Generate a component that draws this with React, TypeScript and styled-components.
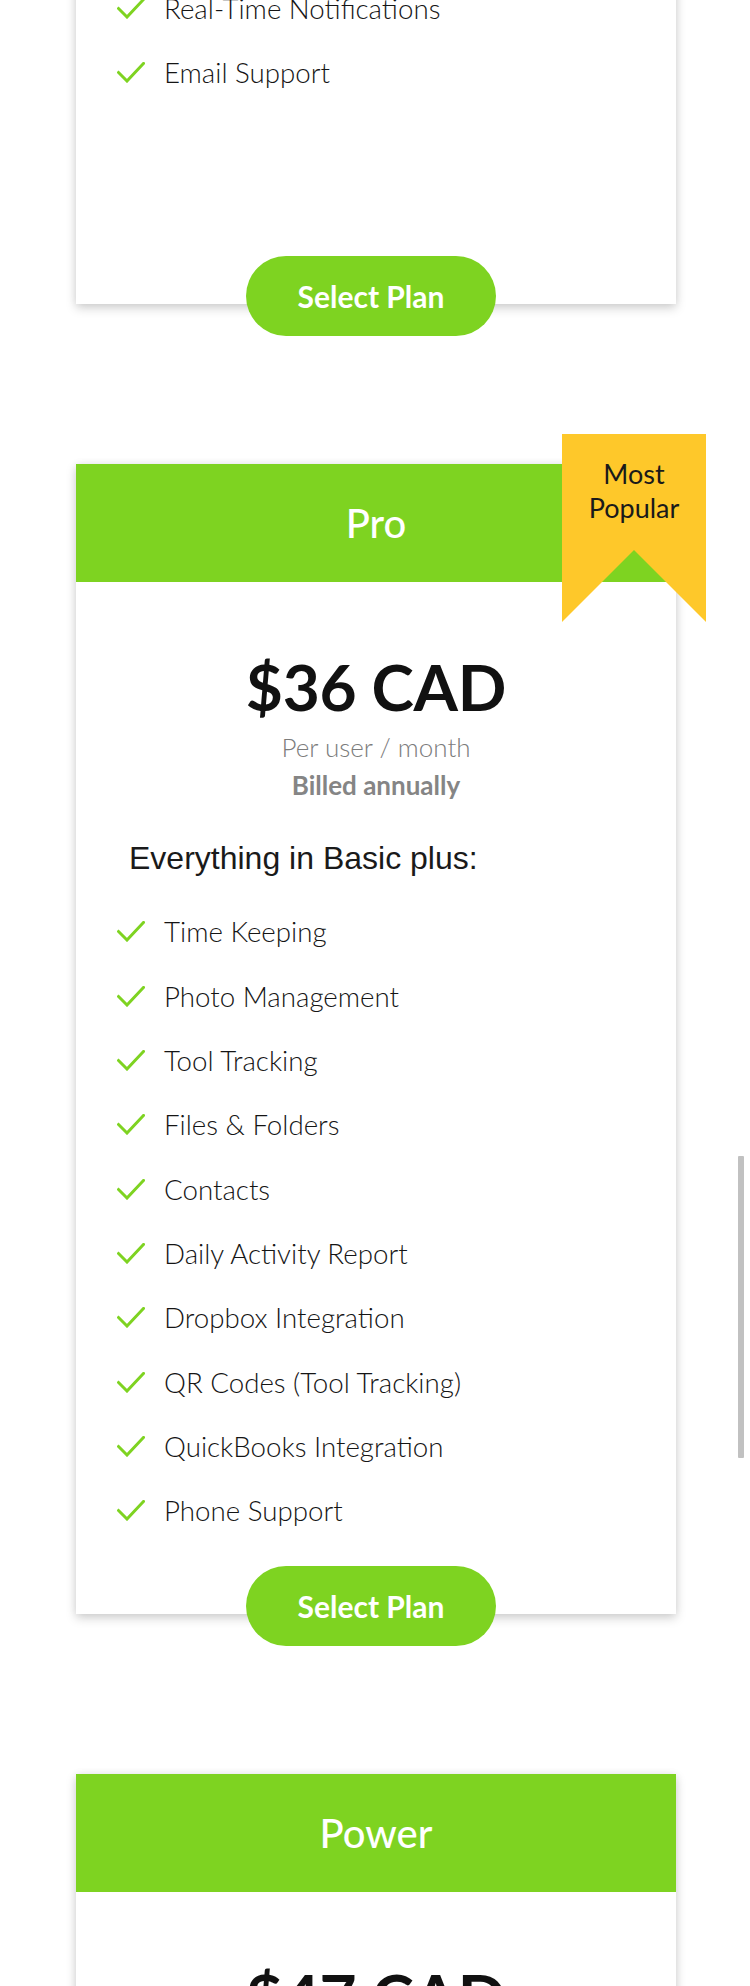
import { styled, createGlobalStyle } from "styled-components";

const GlobalStyle = createGlobalStyle`
	html, body {
		margin: 0;
		padding: 0;
		background: #ffffff;
		overflow: hidden;
	}
`;

const GREEN = "#7ed321";

const Page = styled.div`
	width: 750px;
	height: 1986px;
	overflow: hidden;
	box-sizing: border-box;
	padding-left: 2px;
	display: flex;
	flex-direction: column;
	align-items: center;
	gap: 160px;
	font-family: Lato, "Open Sans", sans-serif;
`;

const Card = styled.div<{ $clipped?: boolean }>`
	position: relative;
	flex-shrink: 0;
	width: 600px;
	display: flex;
	flex-direction: column;
	background: #ffffff;
	margin-top: ${(p) => (p.$clipped ? "-24px" : "0")};
	box-shadow: 0 4px 10px rgba(0, 0, 0, 0.18), 0 0 8px rgba(0, 0, 0, 0.06);
`;

const CardHeader = styled.div`
	height: 118px;
	display: flex;
	align-items: center;
	justify-content: center;
	background: ${GREEN};

	h2 {
		margin: 0;
		color: #ffffff;
		font-size: 40px;
		font-weight: 500;
		line-height: 1;
	}
`;

const Ribbon = styled.div`
	position: absolute;
	top: -30px;
	right: -30px;
	width: 144px;
	height: 188px;
	box-sizing: border-box;
	padding-top: 23px;
	background: #fec82a;
	clip-path: polygon(0 0, 100% 0, 100% 100%, 50% 116px, 0 100%);
	color: #1a1a1a;
	font-size: 27px;
	line-height: 34px;
	text-align: center;
`;

const CardBody = styled.div`
	padding-top: 67px;
	text-align: center;
`;

const Price = styled.div`
	margin: 0;
	font-size: 64px;
	font-weight: 700;
	line-height: 1.2;
	letter-spacing: -0.3px;
	color: #111111;
`;

const Period = styled.div<{ $bold?: boolean }>`
	font-size: 26px;
	line-height: 38px;
	font-weight: ${(p) => (p.$bold ? 700 : 300)};
	color: ${(p) => (p.$bold ? "#858585" : "#7c7c7c")};
	margin-top: ${(p) => (p.$bold ? "0" : "2px")};
`;

const Intro = styled.div`
	margin-top: 34px;
	padding-left: 53px;
	text-align: left;
	font-family: "Liberation Sans", Arial, sans-serif;
	font-size: 32px;
	line-height: 40px;
	color: #1a1a1a;
`;

const FeatureList = styled.ul<{ $minHeight?: number; $first?: boolean }>`
	list-style: none;
	margin: ${(p) => (p.$first ? "0" : "22px")} 0 0;
	padding: 0 0 0 41px;
	min-height: ${(p) => (p.$minHeight ? `${p.$minHeight}px` : "0")};
`;

const FeatureItem = styled.li`
	height: 64.3px;
	display: flex;
	align-items: center;
	gap: 19px;
	font-size: 27.7px;
	font-weight: 300;
	color: #151515;
`;

const ButtonRow = styled.div`
	display: flex;
	justify-content: center;
	padding-right: 10px;
	margin: 23px 0 -32px;
`;

const SelectButton = styled.button`
	width: 250px;
	height: 80px;
	border: none;
	border-radius: 40px;
	background: ${GREEN};
	color: #ffffff;
	font-family: Lato, sans-serif;
	font-size: 30px;
	font-weight: 700;
	cursor: pointer;
`;

const ScrollThumb = styled.div`
	position: fixed;
	top: 1156px;
	right: 6px;
	width: 6px;
	height: 302px;
	border-radius: 1px;
	background: #c1c1c1;
`;

const Check = () => (
	<svg width="28" height="21" viewBox="0 0 28 21" fill="none">
		<polyline
			points="1.5,10.5 10,19 26.5,1.5"
			stroke={GREEN}
			strokeWidth="3"
			strokeLinecap="square"
		/>
	</svg>
);

const Features = ({
	items,
	minHeight,
	first,
}: {
	items: string[];
	minHeight?: number;
	first?: boolean;
}) => (
	<FeatureList $minHeight={minHeight} $first={first}>
		{items.map((item) => (
			<FeatureItem key={item}>
				<Check />
				<span>{item}</span>
			</FeatureItem>
		))}
	</FeatureList>
);

const proFeatures = [
	"Time Keeping",
	"Photo Management",
	"Tool Tracking",
	"Files & Folders",
	"Contacts",
	"Daily Activity Report",
	"Dropbox Integration",
	"QR Codes (Tool Tracking)",
	"QuickBooks Integration",
	"Phone Support",
];

const App = () => {
	return (
		<>
			<GlobalStyle />
			<Page>
				<Card $clipped>
					<Features
						first
						minHeight={257}
						items={["Real-Time Notifications", "Email Support"]}
					/>
					<ButtonRow>
						<SelectButton>Select Plan</SelectButton>
					</ButtonRow>
				</Card>

				<Card>
					<Ribbon>
						Most
						<br />
						Popular
					</Ribbon>
					<CardHeader>
						<h2>Pro</h2>
					</CardHeader>
					<CardBody>
						<Price>$36 CAD</Price>
						<Period>Per user / month</Period>
						<Period $bold>Billed annually</Period>
						<Intro>Everything in Basic plus:</Intro>
					</CardBody>
					<Features items={proFeatures} />
					<ButtonRow>
						<SelectButton>Select Plan</SelectButton>
					</ButtonRow>
				</Card>

				<Card>
					<CardHeader>
						<h2>Power</h2>
					</CardHeader>
					<CardBody>
						<Price>$47 CAD</Price>
						<Period>Per user / month</Period>
						<Period $bold>Billed annually</Period>
					</CardBody>
				</Card>
			</Page>
			<ScrollThumb />
		</>
	);
};

export default App;
